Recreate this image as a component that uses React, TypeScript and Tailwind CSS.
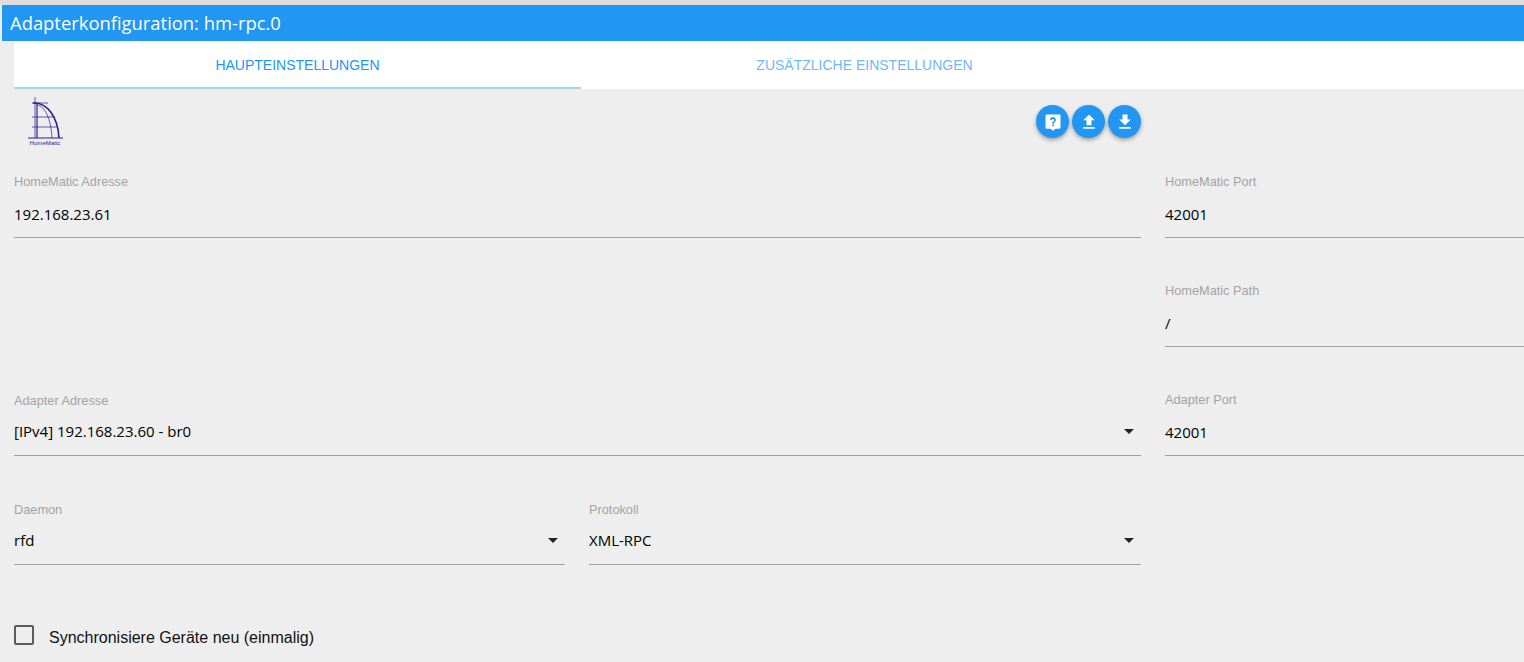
import React from "react";

const labelClass = "block h-[14px] text-[12.75px] leading-[14px] text-[#a3a3a3] font-['Liberation_Sans',sans-serif]";
const valueClass = "flex h-[34px] items-start justify-between border-b border-[#a0a0a0] text-[15px] leading-[20px] text-black font-['Open_Sans',sans-serif]";

function Caret() {
  return (
    <svg width="10" height="5" viewBox="0 0 10 5" className="mt-[8px] mr-[7px]">
      <path d="M0 0h10L5 5z" fill="#222" />
    </svg>
  );
}

function Field({ label, value }: { label: string; value: string }) {
  return (
    <div>
      <label className={labelClass}>{label}</label>
      <div className={`mt-[15px] ${valueClass}`}>
        <span>{value}</span>
      </div>
    </div>
  );
}

function SelectField({ label, value }: { label: string; value: string }) {
  return (
    <div className="pt-[1px]">
      <label className={labelClass}>{label}</label>
      <div className={`mt-[13px] ${valueClass} h-[35px]`}>
        <span>{value}</span>
        <Caret />
      </div>
    </div>
  );
}

function RoundButton({ d }: { d: string }) {
  return (
    <button className="flex h-[33px] w-[33px] items-center justify-center rounded-full bg-[#2196f3] shadow-[0_2px_4px_rgba(0,0,0,0.35)]">
      <svg width="20" height="20" viewBox="0 0 24 24" fill="#fff">
        <path d={d} />
      </svg>
    </button>
  );
}

function Logo() {
  return (
    <div className="ml-[13px] flex h-[50px] w-[36px] flex-col items-center">
      <svg width="36" height="43" viewBox="0 0 36 43" fill="none" stroke="#2e1f8f">
        <path d="M8 0v41" strokeWidth="0.9" opacity="0.8" />
        <path d="M10 6v35" strokeWidth="1.3" opacity="0.9" />
        <path d="M5 6h16M5 20h23M5 30h25" strokeWidth="0.9" opacity="0.8" />
        <path d="M6 6c14-1 25 14 26 35" strokeWidth="1.6" />
        <path d="M10 8c8 1 14 14 15 33" strokeWidth="0.9" opacity="0.8" />
        <path d="M1 41h35" strokeWidth="1.1" />
      </svg>
      <span className="mt-[-1px] text-[6.1px] leading-[7px] text-[#2e1f8f] font-['Liberation_Sans',sans-serif]">HomeMatic</span>
    </div>
  );
}

export default function App() {
  return (
    <div className="h-[662px] w-[1524px] overflow-hidden bg-[#eeeeee]">
      <div className="h-[5px] bg-[#dddddd]" />
      <div className="ml-[2px] flex h-[36px] items-center bg-[#2196f3] pl-[8px] text-[18.4px] text-white font-['Open_Sans',sans-serif]">
        Adapterkonfiguration: hm-rpc.0
      </div>
      <div className="ml-[14px] flex h-[48px] bg-white font-['Liberation_Sans',sans-serif] text-[14px]">
        <div className="flex w-[567px] items-center justify-center border-b-2 border-[#a3d3f8] pt-[3px] text-[#2196f3]">HAUPTEINSTELLUNGEN</div>
        <div className="flex w-[567px] items-center justify-center text-[#6fb8f5]">ZUSÄTZLICHE EINSTELLUNGEN</div>
      </div>

      <div className="grid grid-cols-[1127px_1fr] gap-x-[24px] pl-[14px]">
        <div className="flex h-[86px] items-start justify-between pt-[8px]">
          <Logo />
          <div className="mt-[8px] flex gap-[3px]">
            <RoundButton d="M4 3h16a1 1 0 0 1 1 1v15a1 1 0 0 1-1 1h-5l-3 2.5L9 20H4a1 1 0 0 1-1-1V4a1 1 0 0 1 1-1zm7 12v2h2v-2zm1-9a3.5 3.5 0 0 0-3.5 3.5h2A1.5 1.5 0 1 1 13 11c-1 .7-2 1.4-2 3h2c0-1 .6-1.4 1.3-1.9A3.5 3.5 0 0 0 12 6z" />
            <RoundButton d="M9 16h6v-6h4l-7-7-7 7h4zm-4 2h14v2H5z" />
            <RoundButton d="M19 9h-4V3H9v6H5l7 7zM5 18v2h14v-2z" />
          </div>
        </div>
        <div />

        <Field label="HomeMatic Adresse" value="192.168.23.61" />
        <Field label="HomeMatic Port" value="42001" />
        <div className="h-[46px]" />
        <div />
        <div />
        <Field label="HomeMatic Path" value="/" />
        <div className="h-[46px]" />
        <div />
        <SelectField label="Adapter Adresse" value="[IPv4] 192.168.23.60 - br0" />
        <Field label="Adapter Port" value="42001" />
        <div className="h-[46px]" />
        <div />
        <div className="grid grid-cols-[551px_1fr] gap-x-[24px]">
          <SelectField label="Daemon" value="rfd" />
          <SelectField label="Protokoll" value="XML-RPC" />
        </div>
        <div />
      </div>

      <label className="mt-[60px] ml-[14px] flex h-[20px] items-center gap-[15px]">
        <span className="h-[20px] w-[20px] rounded-[2px] border-2 border-[#5a5a5a]" />
        <span className="pt-[5px] text-[16px] text-[#111] font-['Liberation_Sans',sans-serif]">Synchronisiere Geräte neu (einmalig)</span>
      </label>
    </div>
  );
}
